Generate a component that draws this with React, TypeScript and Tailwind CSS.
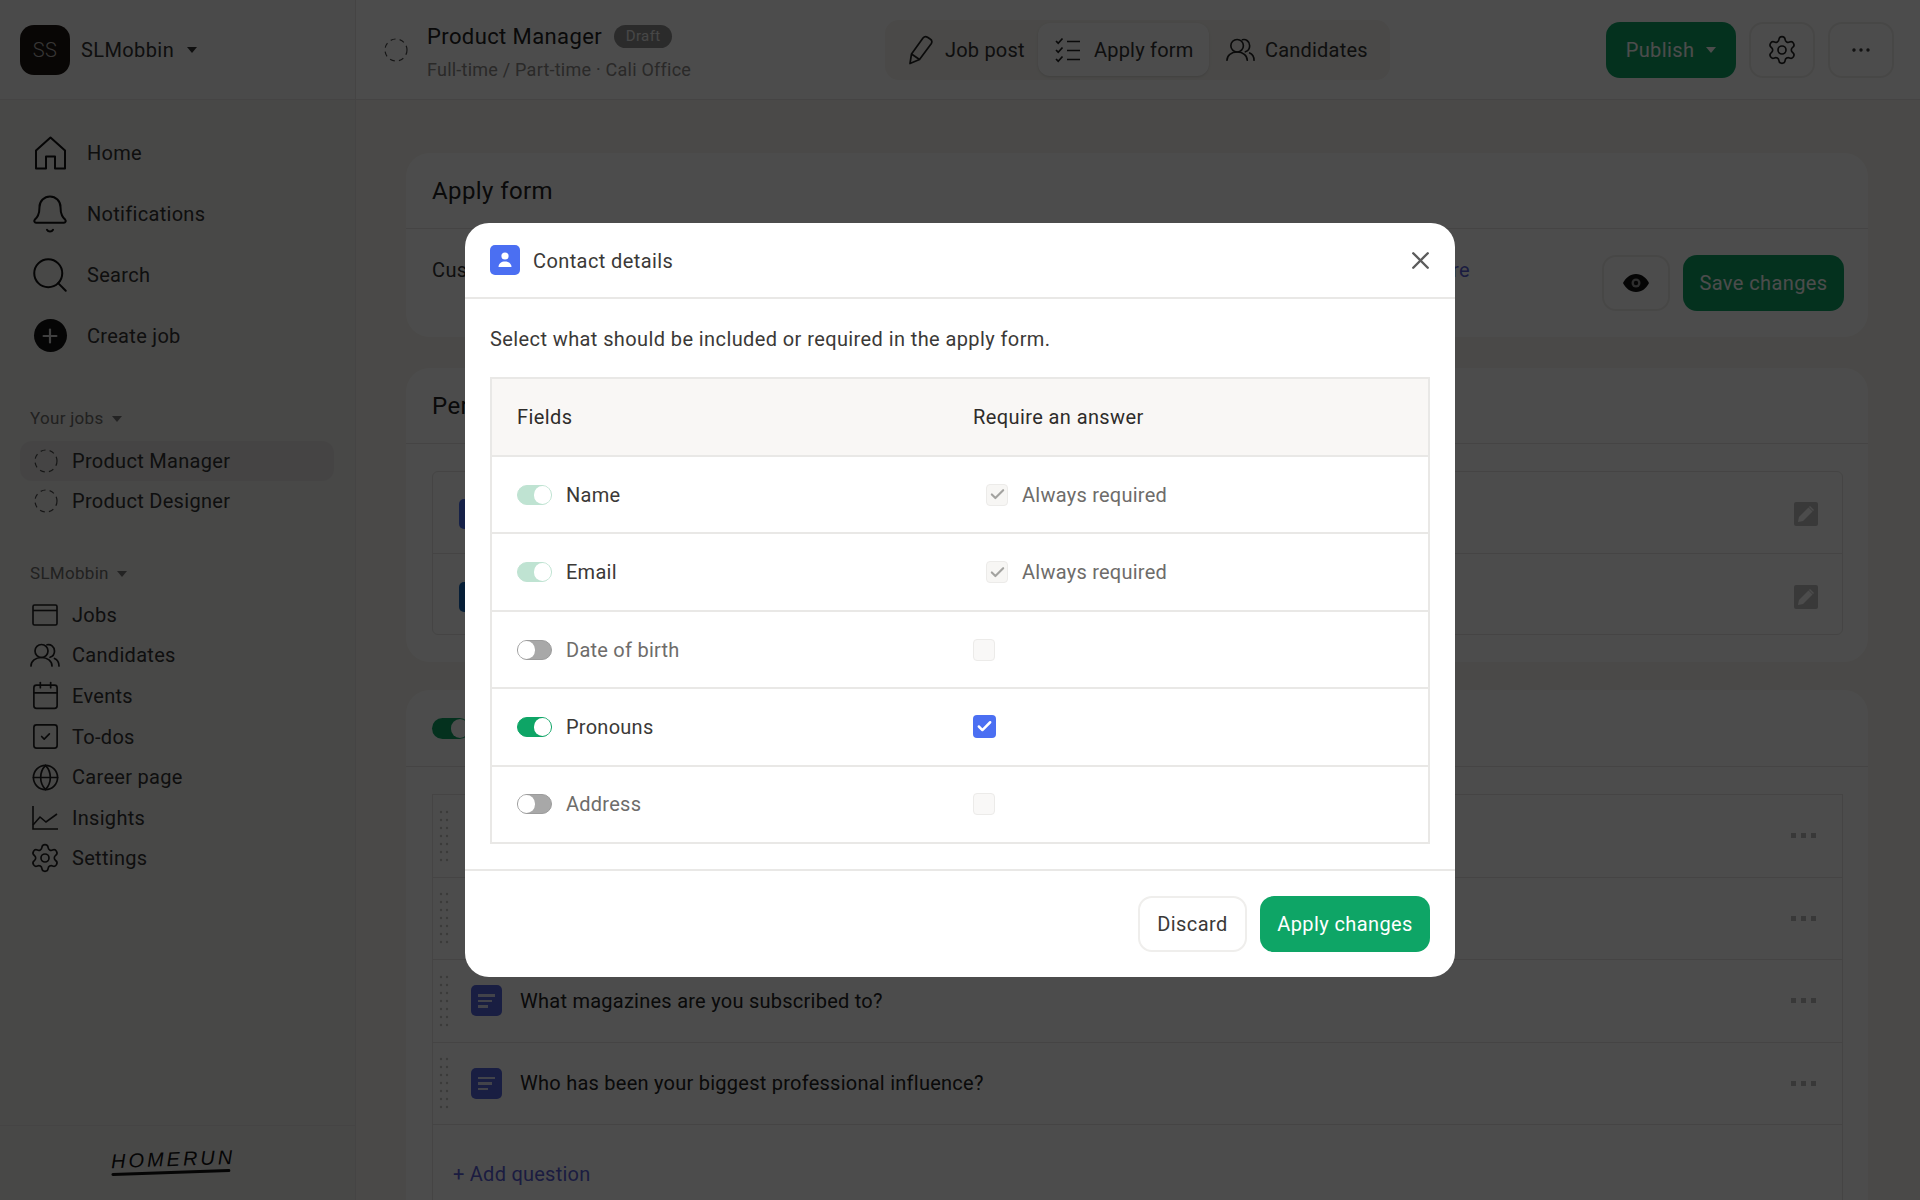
import React from "react";
import { Bell, Calendar, Check, Ellipsis, Globe, Plus, Search, Settings, SquareCheck, X } from "lucide-react";

const Caret = ({ className = "" }: { className?: string }) => (
  <svg width="10" height="6" viewBox="0 0 10 6" className={className}>
    <path d="M0 0h10L5 6z" fill="currentColor" />
  </svg>
);

const DashedCircle = ({ size = 24 }: { size?: number }) => (
  <svg width={size} height={size} viewBox="0 0 24 24" fill="none" className="shrink-0">
    <circle cx="12" cy="12" r="11" stroke="#4a4a4a" strokeWidth="1.2" strokeDasharray="5 4.2" />
  </svg>
);

const HomeIcon = () => (
  <svg width="33" height="34" viewBox="0 0 33 34" fill="none" stroke="#111" strokeWidth="2" strokeLinejoin="round">
    <path d="M2 14.500L16.500 1.500 31 14.500V32.500H21V20.500H12V32.500H2z" />
  </svg>
);

const JobsIcon = () => (
  <svg width="26" height="22" viewBox="0 0 26 22" fill="none" stroke="#202020" strokeWidth="1.6">
    <rect x="1" y="1" width="24" height="20" rx="1.5" />
    <path d="M1 6.500h24" />
  </svg>
);

const PeopleIcon = ({ width = 30, color = "#202020" }: { width?: number; color?: string }) => (
  <svg width={width} height={(width * 24) / 30} viewBox="0 0 30 24" fill="none" stroke={color} strokeWidth="1.7" strokeLinecap="round">
    <circle cx="11.500" cy="8" r="6.500" />
    <path d="M1 23c0-5 4.500-8.500 10.500-8.500S22 18 22 23" />
    <path d="M17 1.800c3.500-1 7.500 1.700 7.500 6.200 0 3-2 5.500-4.500 6.300" />
    <path d="M24.500 15.500c2.800 1.200 4.500 4 4.500 7.500" />
  </svg>
);

const ChecklistIcon = () => (
  <svg width="26" height="26" viewBox="0 0 26 26" fill="none" stroke="#222" strokeWidth="1.7">
    <path d="M1 4l2.200 2.200L7.500 1.500M1 13l2.200 2.200L7.500 10.500M1 22l2.200 2.200L7.500 19.500" />
    <path d="M12 4.500h13M12 13.500h13M12 22.500h13" />
  </svg>
);

const PencilIcon = () => (
  <svg width="26" height="30" viewBox="0 0 26 30" fill="none" stroke="#222" strokeWidth="1.7" strokeLinejoin="round">
    <path d="M2 28.500l1.500-9.500L15 3c1.200-1.500 3-1.800 4.500-.8l3 2.100c1.500 1 1.800 2.800.7 4.400L11.500 24.500z" />
    <path d="M3.500 19l8 5.500" />
  </svg>
);

const ChartIcon = () => (
  <svg width="26" height="24" viewBox="0 0 26 24" fill="none" stroke="#202020" strokeWidth="1.6">
    <path d="M1 0v23h25" />
    <path d="M1 19l7-8 6 5 11-8" />
  </svg>
);

const EyeIcon = () => (
  <svg width="26" height="18" viewBox="0 0 26 18">
    <path d="M13 0C7 0 2.500 4 0 9c2.500 5 7 9 13 9s10.500-4 13-9c-2.500-5-7-9-13-9z" fill="#111" />
    <circle cx="13" cy="9" r="4.500" fill="#999" />
    <circle cx="13" cy="9" r="2.200" fill="#111" />
  </svg>
);

const DragHandle = () => (
  <svg width="10" height="52" viewBox="0 0 10 52" className="shrink-0">
    {[2, 10, 18, 26, 34, 42, 50].map((y) => (
      <g key={y} fill="#c4c4c2">
        <circle cx="2" cy={y} r="1.200" />
        <circle cx="8" cy={y} r="1.200" />
      </g>
    ))}
  </svg>
);

const RowDots = () => (
  <span className="ml-auto flex gap-[5px]">
    <span className="w-[5px] h-[5px] bg-[#bdbdbd]" />
    <span className="w-[5px] h-[5px] bg-[#bdbdbd]" />
    <span className="w-[5px] h-[5px] bg-[#bdbdbd]" />
  </span>
);

const QuestionIcon = () => (
  <div className="w-[31px] h-[31px] shrink-0 rounded-[5px] bg-[#5566dd] flex flex-col justify-center gap-[3px] pl-[7px]">
    <span className="block w-[17px] h-[2.5px] bg-white/80" />
    <span className="block w-[14px] h-[2.5px] bg-white/80" />
    <span className="block w-[10px] h-[2.5px] bg-white/80" />
  </div>
);

const MainNav = [
  { label: "Home", icon: <HomeIcon /> },
  { label: "Notifications", icon: <Bell size={42} strokeWidth={1.15} color="#111" /> },
  { label: "Search", icon: <Search size={42} strokeWidth={1.15} color="#111" /> },
];

const WorkspaceNav = [
  { label: "Jobs", icon: <JobsIcon /> },
  { label: "Candidates", icon: <PeopleIcon /> },
  { label: "Events", icon: <Calendar size={31} strokeWidth={1.3} color="#202020" /> },
  { label: "To-dos", icon: <SquareCheck size={31} strokeWidth={1.3} color="#202020" /> },
  { label: "Career page", icon: <Globe size={29} strokeWidth={1.4} color="#202020" /> },
  { label: "Insights", icon: <ChartIcon /> },
  { label: "Settings", icon: <Settings size={32} strokeWidth={1.25} color="#202020" /> },
];

const Toggle = ({ state }: { state: "on" | "locked" | "off" }) => {
  if (state === "off") {
    return (
      <span className="flex items-center w-[35px] h-[20px] rounded-full bg-[#a8a8a8] border border-[#9c9c9c] shrink-0">
        <span className="w-[17px] h-[18px] rounded-full bg-white" />
      </span>
    );
  }
  return (
    <span
      className={`flex items-center justify-end w-[35px] h-[20px] rounded-full shrink-0 border ${
        state === "on" ? "bg-[#0ea566] border-[#0ea566]" : "bg-[#bfe3d2] border-[#bfe3d2]"
      }`}
    >
      <span className="w-[17px] h-[18px] rounded-full bg-white" />
    </span>
  );
};

const rows = [
  { name: "Name", toggle: "locked", check: "always" },
  { name: "Email", toggle: "locked", check: "always" },
  { name: "Date of birth", toggle: "off", check: "empty" },
  { name: "Pronouns", toggle: "on", check: "checked" },
  { name: "Address", toggle: "off", check: "empty" },
] as const;

const ContactDetailsModal = () => (
  <div className="absolute inset-0 bg-black/70 flex items-center justify-center">
    <div className="w-[990px] h-[754px] bg-white rounded-[24px] flex flex-col text-[#3b3937]">
      <div className="h-[76px] shrink-0 border-b-2 border-[#e9e8e6] flex items-center justify-between pl-[25px] pr-[20px]">
        <div className="flex items-center gap-[13px]">
          <span className="w-[30px] h-[30px] rounded-[5px] bg-[#4b6ff2] flex items-center justify-center">
            <svg width="18" height="18" viewBox="0 0 18 18" fill="white">
              <circle cx="9" cy="5" r="3.600" />
              <path d="M2.500 16c0-3.600 2.900-5.600 6.500-5.600s6.500 2 6.500 5.600z" />
            </svg>
          </span>
          <span className="text-[20px] pt-[2px]">Contact details</span>
        </div>
        <X size={29} strokeWidth={2} color="#5c5c5c" />
      </div>
      <div className="px-[25px] flex-1 flex flex-col">
        <p className="h-[78px] shrink-0 flex items-center text-[20px] pt-[2px]">
          Select what should be included or required in the apply form.
        </p>
        <div className="h-[467px] border-2 border-[#e9e8e6] flex flex-col">
          <div className="h-[76px] shrink-0 bg-[#f9f7f5] grid grid-cols-[456px_1fr] items-center pl-[25px] text-[20px] text-[#2e2c2a]">
            <span>Fields</span>
            <span>Require an answer</span>
          </div>
          {rows.map((row) => (
            <div
              key={row.name}
              className="flex-1 border-t-2 border-[#e9e8e6] grid grid-cols-[456px_1fr] items-center pl-[25px] text-[20px] tracking-[0.25px]"
            >
              <div className="flex items-center gap-[14px]">
                <Toggle state={row.toggle} />
                <span className={row.toggle === "off" ? "text-[#6e6c6a]" : ""}>{row.name}</span>
              </div>
              {row.check === "always" && (
                <div className="flex items-center gap-[14px] pl-[13px] text-[#6e6c6a]">
                  <span className="w-[22px] h-[22px] rounded-[4px] bg-[#f7f6f4] border border-[#ecebe9] flex items-center justify-center">
                    <Check size={17} strokeWidth={3} color="#a3a3a0" />
                  </span>
                  <span>Always required</span>
                </div>
              )}
              {row.check === "empty" && (
                <span className="w-[22px] h-[22px] rounded-[4px] bg-[#f9f8f7] border border-[#ecebe9]" />
              )}
              {row.check === "checked" && (
                <span className="w-[23px] h-[23px] rounded-[4px] bg-[#4b6ff2] flex items-center justify-center">
                  <Check size={17} strokeWidth={3.5} color="white" />
                </span>
              )}
            </div>
          ))}
        </div>
      </div>
      <div className="h-[108px] shrink-0 border-t-2 border-[#e9e8e6] flex items-center justify-end gap-[13px] pr-[25px] text-[20px]">
        <button className="w-[109px] h-[56px] rounded-[14px] border-2 border-[#efeeec] bg-white">Discard</button>
        <button className="w-[170px] h-[56px] rounded-[14px] bg-[#0ea566] text-white">Apply changes</button>
      </div>
    </div>
  </div>
);

const TopBar = () => (
  <header className="h-[100px] shrink-0 flex border-b border-[#e6e5e3] bg-white">
    <div className="w-[356px] shrink-0 bg-[#f9f9f8] border-r border-[#e6e5e3] flex items-center pl-[20px]">
      <div className="w-[50px] h-[50px] rounded-[14px] bg-[#1c1412] flex items-center justify-center text-[20px] text-[#b9b6b4] font-light">
        SS
      </div>
      <span className="ml-[11px] text-[20px]">SLMobbin</span>
      <Caret className="ml-[13px] text-[#333]" />
    </div>
    <div className="flex-1 flex items-center pl-[28px] pr-[26px]">
      <DashedCircle />
      <div className="ml-[19px] w-[458px] pt-[3px]">
        <div className="flex items-center gap-[12px] h-[34px]">
          <span className="text-[22px] text-[#222]">Product Manager</span>
          <span className="h-[23px] w-[58px] rounded-full bg-[#8f8f8f] flex items-center justify-center text-[15px] text-[#eee]">
            Draft
          </span>
        </div>
        <div className="text-[18px] text-[#8c8a88] mt-[3px] tracking-[0.23px]">Full-time / Part-time · Cali Office</div>
      </div>
      <nav className="w-[505px] h-[60px] rounded-[14px] bg-[#f7f5f0] flex items-center text-[20px] pl-[23px] tracking-[0.2px]">
        <PencilIcon />
        <span className="ml-[11px] w-[93px]">Job post</span>
        <div className="w-[171px] h-[53px] rounded-[12px] bg-white shadow-sm flex items-center pl-[17px]">
          <ChecklistIcon />
          <span className="ml-[13px]">Apply form</span>
        </div>
        <span className="ml-[17px]">
          <PeopleIcon width={29} color="#222" />
        </span>
        <span className="ml-[10px]">Candidates</span>
      </nav>
      <div className="ml-auto flex items-center gap-[13px]">
        <button className="w-[130px] h-[56px] rounded-[14px] bg-[#0ea566] text-white text-[20px] flex items-center justify-center gap-[12px]">
          Publish
          <Caret className="text-white" />
        </button>
        <button className="w-[66px] h-[56px] rounded-[14px] border-2 border-[#efeeec] flex items-center justify-center">
          <Settings size={32} strokeWidth={1.25} color="#222" />
        </button>
        <button className="w-[66px] h-[56px] rounded-[14px] border-2 border-[#efeeec] flex items-center justify-center">
          <Ellipsis size={24} strokeWidth={1.4} color="#333" />
        </button>
      </div>
    </div>
  </header>
);

const Sidebar = () => (
  <aside className="w-[356px] shrink-0 bg-[#f1f0ee] border-r border-[#e6e5e3] flex flex-col">
    <div className="flex-1 px-[20px] pt-[22px] text-[20px] tracking-[0.3px]">
      {MainNav.map((item) => (
        <div key={item.label} className="h-[61px] flex items-center">
          <span className="w-[67px] flex justify-center pl-[2px] pr-[9px]">{item.icon}</span>
          <span>{item.label}</span>
        </div>
      ))}
      <div className="h-[61px] flex items-center">
        <span className="w-[67px] flex justify-center pr-[7px]">
          <span className="w-[33px] h-[33px] rounded-full bg-[#111] flex items-center justify-center">
            <Plus size={22} strokeWidth={2.4} color="#d5d5d5" />
          </span>
        </span>
        <span>Create job</span>
      </div>

      <div className="mt-[39px] h-[27px] flex items-center gap-[8px] pl-[10px] text-[17px] text-[#6f6e6c]">
        Your jobs
        <Caret className="text-[#777]" />
      </div>
      <div className="mt-[9px] h-[40px] rounded-[12px] bg-[#e6e5e3] flex items-center pl-[14px] w-[314px]">
        <DashedCircle />
        <span className="ml-[14px]">Product Manager</span>
      </div>
      <div className="h-[40px] flex items-center pl-[14px]">
        <DashedCircle />
        <span className="ml-[14px]">Product Designer</span>
      </div>

      <div className="mt-[39px] h-[27px] flex items-center gap-[8px] pl-[10px] text-[17px] text-[#6f6e6c]">
        SLMobbin
        <Caret className="text-[#777]" />
      </div>
      <div className="mt-[7.5px] -ml-[2px]">
        {WorkspaceNav.map((item) => (
          <div key={item.label} className="h-[40.6px] flex items-center">
            <span className="w-[54px] flex justify-center px-[6px]">{item.icon}</span>
            <span>{item.label}</span>
          </div>
        ))}
      </div>
    </div>
    <div className="h-[75px] shrink-0 border-t border-[#e6e5e3] flex items-start justify-center pt-[22px] pr-[12px]">
      <div className="-rotate-2 w-[122px] flex flex-col gap-[1px]">
        <span className="italic text-[20px] leading-[22px] tracking-[3px] text-[#111] font-['Liberation_Sans',sans-serif]">
          HOMERUN
        </span>
        <span className="h-[3px] w-[119px] bg-[#111] rounded-full" />
      </div>
    </div>
  </aside>
);

const EditButton = () => (
  <span className="w-[24px] h-[24px] rounded-[2px] bg-[#c0c0c0] flex items-center justify-center">
    <svg width="18" height="18" viewBox="0 0 18 18" fill="white">
      <path d="M1 17l1-5L11.500 2.500l4 4L6 16z" />
      <path d="M13 1l4 4-1 1-4-4z" />
    </svg>
  </span>
);

const Main = () => (
  <main className="flex-1 bg-[#f8f6f1] pl-[50px] pr-[52px] pt-[53px] overflow-hidden">
    <section className="h-[184px] rounded-[24px] bg-white">
      <div className="h-[76px] border-b border-[#e6e5e3] flex items-center pl-[26px] text-[24px] text-[#222] pt-[1px]">
        Apply form
      </div>
      <div className="h-[108px] flex items-center pl-[26px] pr-[24px] text-[20px]">
        <div className="w-[1038px] flex justify-between -mt-[26px]">
          <span>Customize your application form.</span>
          <span className="text-[#5a60d8]">Learn more</span>
        </div>
        <div className="ml-auto flex gap-[13px]">
          <button className="w-[68px] h-[56px] rounded-[14px] border-2 border-[#efeeec] flex items-center justify-center">
            <EyeIcon />
          </button>
          <button className="w-[161px] h-[56px] rounded-[14px] bg-[#0ea566] text-white">Save changes</button>
        </div>
      </div>
    </section>

    <section className="mt-[31px] h-[294px] rounded-[24px] bg-white">
      <div className="h-[76px] border-b border-[#e6e5e3] flex items-center pl-[26px] text-[24px] text-[#222]">
        Personal details
      </div>
      <div className="ml-[26px] mr-[25px] mt-[27px] h-[164px] rounded-[6px] border border-[#e6e5e3]">
        <div className="h-[82px] border-b border-[#e6e5e3] flex items-center pl-[26px] pr-[24px] pt-[3px] justify-between">
          <span className="w-[30px] h-[30px] rounded-[5px] bg-[#4b6ff2]" />
          <EditButton />
        </div>
        <div className="h-[81px] flex items-center pl-[26px] pr-[24px] pt-[4px] justify-between">
          <span className="w-[30px] h-[30px] rounded-[5px] bg-[#1667b8]" />
          <EditButton />
        </div>
      </div>
    </section>

    <section className="mt-[28px] rounded-t-[24px] bg-white">
      <div className="h-[77px] border-b border-[#e6e5e3] flex items-center pl-[26px]">
        <span className="flex items-center justify-end w-[38px] h-[21px] rounded-full bg-[#0ea566] pr-[1px]">
          <span className="w-[18px] h-[19px] rounded-full bg-white" />
        </span>
      </div>
      <div className="ml-[26px] mr-[25px] mt-[27px] border border-[#e6e5e3] text-[20px] text-[#222] tracking-[0.25px]">
        {["", "", "What magazines are you subscribed to?", "Who has been your biggest professional influence?"].map(
          (question, i) => (
            <div key={i} className="h-[82.5px] border-b border-[#e6e5e3] flex items-center pl-[6px] pr-[26px]">
              <DragHandle />
              <span className="ml-[22px]">
                <QuestionIcon />
              </span>
              <span className="ml-[18px]">{question}</span>
              <RowDots />
            </div>
          )
        )}
        <div className="h-[98px] flex items-center pl-[20px] text-[#5a60d8]">+ Add question</div>
      </div>
    </section>
  </main>
);

export default function App() {
  return (
    <div className="relative h-[1200px] overflow-hidden flex flex-col font-[Roboto,sans-serif] tracking-[0.4px] text-[#333]">
      <TopBar />
      <div className="flex-1 flex min-h-0">
        <Sidebar />
        <Main />
      </div>
      <ContactDetailsModal />
    </div>
  );
}
